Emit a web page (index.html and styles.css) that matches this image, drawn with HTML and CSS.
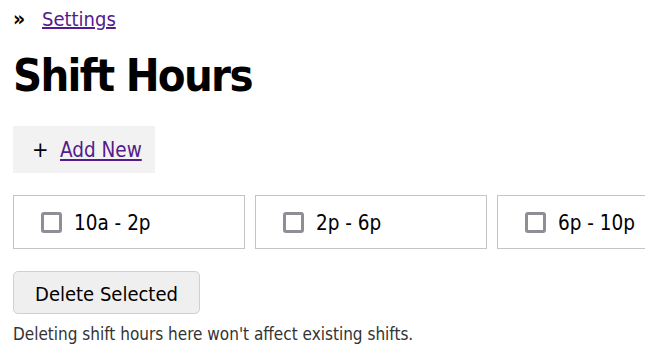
FILE: index.html
```html
<!DOCTYPE html>
<html lang="en">
<head>
<meta charset="utf-8">
<title>Shift Hours</title>
<link rel="stylesheet" href="styles.css">
</head>
<body>
<nav class="crumbs">
  <span class="crumb-sep">»</span>
  <a href="#settings" class="crumb-link">Settings</a>
</nav>
<h1 class="title">Shift Hours</h1>
<div class="add-new">
  <span class="plus">+</span>
  <a href="#new" class="add-link">Add New</a>
</div>
<div class="shift-list">
  <label class="shift-card"><span class="box"></span><span class="shift-text">10a - 2p</span></label>
  <label class="shift-card"><span class="box"></span><span class="shift-text">2p - 6p</span></label>
  <label class="shift-card"><span class="box"></span><span class="shift-text">6p - 10p</span></label>
</div>
<button class="delete-btn" type="button">Delete Selected</button>
<p class="note">Deleting shift hours here won't affect existing shifts.</p>
</body>
</html>
```

FILE: styles.css
```css
html, body {
  margin: 0;
  padding: 0;
  background: #fff;
  overflow: hidden;
}
body {
  font-family: "DejaVu Sans Condensed", "DejaVu Sans", sans-serif;
  color: #000;
  padding: 0 13px;
  width: 645px;
  box-sizing: border-box;
}
.crumbs {
  display: flex;
  align-items: center;
  height: 38px;
  font-size: 20px;
}
.crumb-sep {
  width: 29px;
  font-size: 21px;
  font-weight: bold;
}
.crumb-link, .add-link {
  color: #551a8b;
}
.title {
  margin: 0;
  font-size: 45px;
  letter-spacing: -1.7px;
  font-weight: bold;
  height: 88px;
  line-height: 76px;
}
.add-new {
  display: inline-flex;
  align-items: center;
  height: 47px;
  width: 142px;
  box-sizing: border-box;
  padding-left: 19px;
  background: #f2f2f2;
  font-size: 20.5px;
}
.plus {
  width: 28px;
  font-size: 22px;
}
.shift-list {
  display: flex;
  gap: 10px;
  margin: 22px -13px 0 0;
  overflow: hidden;
}
.shift-card {
  flex: 0 0 232px;
  box-sizing: border-box;
  height: 54px;
  border: 1px solid #c4c4c4;
  display: flex;
  align-items: center;
  padding: 2px 0 0 27px;
  font-size: 20.5px;
}
.box {
  width: 21px;
  height: 21px;
  box-sizing: border-box;
  border: 3px solid #8f8e97;
  border-radius: 3px;
  margin: -2px 12px 0 0;
}
.delete-btn {
  display: block;
  margin-top: 22px;
  width: 187px;
  height: 43px;
  font-family: inherit;
  font-size: 20px;
  color: #000;
  background: #efefef;
  border: 1px solid #d0d0d0;
  border-radius: 5px;
  padding: 2px 0 0;
}
.note {
  margin: 10px 0 0;
  font-size: 17px;
  color: #333;
}
```
